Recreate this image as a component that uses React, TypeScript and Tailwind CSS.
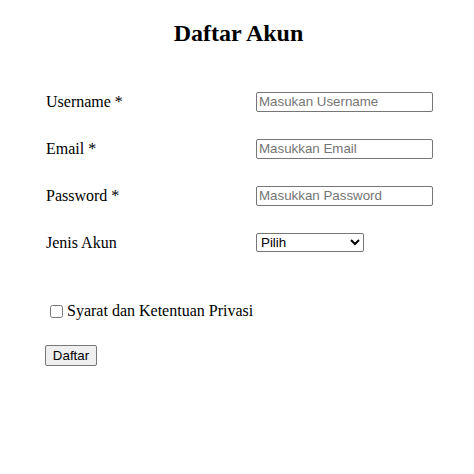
import React from "react";

export default function App() {
  return (
    <div className="w-[474px] h-[474px] bg-white text-black font-['Liberation_Serif',serif] text-base">
      <h2 className="pt-[20px] pl-[3px] text-center text-[24px] font-bold leading-[27px]">Daftar Akun</h2>

      <form className="mt-[31px] pl-[46px]">
        <div className="grid grid-cols-[210px_177px] auto-rows-[47px] items-center">
          <label>Username *</label>
          <input
            type="text"
            placeholder="Masukan Username"
            className="h-[20px] w-[177px] rounded-[2px] border border-[#767676] px-[2px] font-['Liberation_Sans',sans-serif] text-[13.33px] placeholder:text-[#757575]"
          />
          <label>Email *</label>
          <input
            type="email"
            placeholder="Masukkan Email"
            className="h-[20px] w-[177px] rounded-[2px] border border-[#767676] px-[2px] font-['Liberation_Sans',sans-serif] text-[13.33px] placeholder:text-[#757575]"
          />
          <label>Password *</label>
          <input
            type="password"
            placeholder="Masukkan Password"
            className="h-[20px] w-[177px] rounded-[2px] border border-[#767676] px-[2px] font-['Liberation_Sans',sans-serif] text-[13.33px] placeholder:text-[#757575]"
          />
          <label>Jenis Akun</label>
          <select className="h-[19px] w-[108px] rounded-[2px] border border-[#767676] bg-white font-['Liberation_Sans',sans-serif] text-[13.33px]">
            <option>Pilih</option>
            <option>Pribadi</option>
            <option>Bisnis</option>
          </select>
        </div>

        <label className="mt-[33px] flex items-center gap-[4px] pl-[4px]">
          <input type="checkbox" className="m-0 h-[13px] w-[13px]" />
          <span>Syarat dan Ketentuan Privasi</span>
        </label>

        <button
          type="submit"
          className="-ml-[1px] mt-[22px] h-[21px] w-[52px] rounded-[2px] border border-[#767676] bg-[#efefef] font-['Liberation_Sans',sans-serif] text-[13.33px] leading-none"
        >
          Daftar
        </button>
      </form>
    </div>
  );
}
